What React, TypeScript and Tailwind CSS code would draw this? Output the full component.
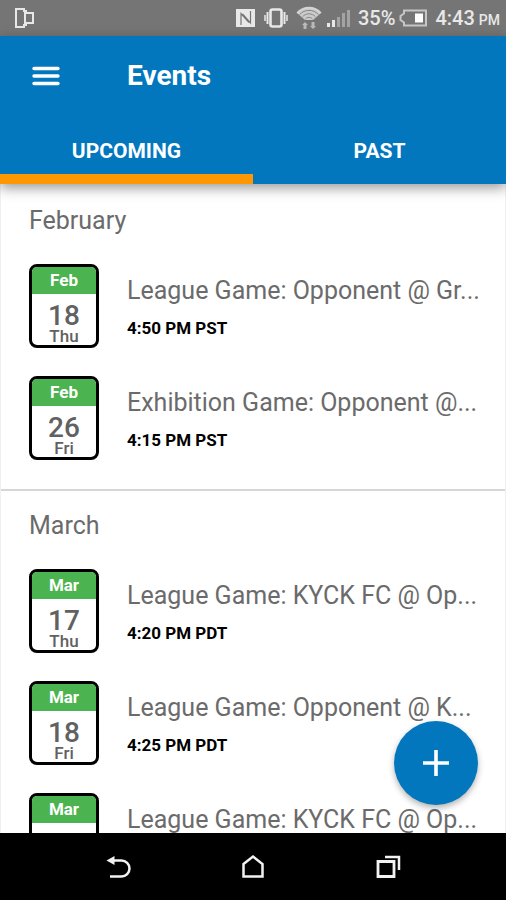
import { useState } from "react";

type eventType = {
  month: string;
  day: number;
  weekday: string;
  title: string;
  time: string;
};

type sectionType = {
  name: string;
  events: eventType[];
};

const sections: sectionType[] = [
  {
    name: "February",
    events: [
      { month: "Feb", day: 18, weekday: "Thu", title: "League Game: Opponent @ Gr...", time: "4:50 PM PST" },
      { month: "Feb", day: 26, weekday: "Fri", title: "Exhibition Game: Opponent @...", time: "4:15 PM PST" },
    ],
  },
  {
    name: "March",
    events: [
      { month: "Mar", day: 17, weekday: "Thu", title: "League Game: KYCK FC @ Op...", time: "4:20 PM PDT" },
      { month: "Mar", day: 18, weekday: "Fri", title: "League Game: Opponent @ K...", time: "4:25 PM PDT" },
      { month: "Mar", day: 24, weekday: "Thu", title: "League Game: KYCK FC @ Op...", time: "4:30 PM PDT" },
    ],
  },
];

function StatusBar() {
  return (
    <div className="flex h-9 shrink-0 items-center justify-between bg-[#757575] pr-1.5 pl-3.5 text-[#e8e8e8]">
      <svg viewBox="0 0 21 22" className="h-[22px] w-[21px]" fill="none" stroke="currentColor" strokeWidth="2">
        <path d="M12 6V4h-2V2H2v18h8v-2h2v-2" />
        <rect x="11" y="6" width="8" height="10" />
      </svg>

      <div className="flex items-center">
        {/* nfc */}
        <svg viewBox="0 0 20 20" className="h-5 w-5">
          <path fill="currentColor" d="M0 1h19v18H0z" />
          <path fill="none" stroke="#757575" strokeWidth="1.200" d="M5 17V5.500l8 9M14.500 3v12L6.500 6" />
        </svg>

        {/* vibrate */}
        <svg viewBox="0 0 24 20" className="ml-2 h-5 w-6" fill="none" stroke="currentColor">
          <rect x="6.500" y="1.500" width="11" height="17" rx="2" strokeWidth="2.600" />
          <path strokeWidth="2" d="M3.500 4v12M20.500 4v12" />
          <path strokeWidth="1.500" d="M1 7v6M23 7v6" />
        </svg>

        {/* wifi */}
        <svg viewBox="0 0 26 24" className="ml-2 h-6 w-[26px]" fill="none" stroke="currentColor">
          <path fill="currentColor" stroke="none" opacity="0.75" d="M1 7C7-.5 19-.5 25 7L17 14H9z" />
          <path stroke="#757575" strokeWidth="0.800" d="M3.500 8.500c5-5.500 14-5.500 19 0M6.500 10.800c3.500-4 9.500-4 13 0M9.500 13c2-2.200 5-2.200 7 0" />
          <path strokeWidth="1.500" opacity="0.75" d="M1 7C7-.5 19-.5 25 7" />
          <path fill="currentColor" stroke="none" opacity="0.6" d="M6 19l3-3 3 3h-1.500v4h-3v-4zM14 20h1.500v-4h3v4H20l-3 3z" />
        </svg>

        {/* signal */}
        <svg viewBox="0 0 24 18" className="ml-1 h-[18px] w-6" fill="currentColor">
          <path d="M1 14h3v4H1zM6 11h3v7H6z" />
          <path opacity="0.4" d="M11 8h3v10h-3zM16 4h3v14h-3zM21 1h3v17h-3z" />
        </svg>

        <span className="ml-2 text-[20px] leading-6 font-medium">35%</span>

        {/* battery */}
        <svg viewBox="0 0 28 18" className="ml-1 h-[18px] w-7">
          <path fill="none" stroke="currentColor" strokeWidth="2" opacity="0.7" d="M5 1.500h22v15H5v-3L1.500 11V7L5 4.500z" />
          <path fill="#fff" d="M16 4.500h8v9h-8z" />
        </svg>

        <span className="ml-2 text-[20px] leading-6 font-medium">
          4:43<span className="ml-1 text-sm">PM</span>
        </span>
      </div>
    </div>
  );
}

function DateBadge({ event }: { event: eventType }) {
  return (
    <div className="flex h-[84px] w-[70px] shrink-0 flex-col overflow-hidden rounded-lg border-[3px] border-black bg-white text-center text-[#616161]">
      <span className="bg-[#4bb34f] text-[17px] leading-[27px] font-bold text-white">{event.month}</span>
      <span className="pt-2.5 text-[28px] leading-6 font-medium">{event.day}</span>
      <span className="text-[17px] leading-4 font-medium">{event.weekday}</span>
    </div>
  );
}

function EventRow({ event }: { event: eventType }) {
  return (
    <li className="flex h-28 items-start pl-7">
      <DateBadge event={event} />
      <div className="ml-7 min-w-0 pt-2">
        <h3 className="text-[25px] leading-[38px] whitespace-nowrap text-[#6b6b6b]">{event.title}</h3>
        <p className="pt-1.5 text-[17px] leading-6 font-bold text-black">{event.time}</p>
      </div>
    </li>
  );
}

export default function App() {
  const [tab, setTab] = useState<string>("UPCOMING");

  return (
    <div className="flex h-screen flex-col overflow-hidden bg-white font-['Roboto',sans-serif]">
      <StatusBar />

      <header className="z-10 shrink-0 bg-[#0277bd] text-white shadow-[0_4px_12px_rgba(0,0,0,0.4)]">
        <div className="flex h-20 items-center pl-8">
          <button aria-label="Menu">
            <svg viewBox="0 0 28 20" className="h-5 w-7" stroke="currentColor" strokeWidth="3.400" strokeLinecap="round">
              <path d="M2 2.500h24M2 10h24M2 17.500h24" />
            </svg>
          </button>
          <h1 className="ml-[67px] text-[28px] leading-8 font-bold">Events</h1>
        </div>

        <nav className="grid h-[68px] grid-cols-2">
          {["UPCOMING", "PAST"].map((name) => (
            <button
              key={name}
              onClick={() => setTab(name)}
              className={`border-b-[10px] pt-3 text-[21px] leading-7 font-bold ${
                tab == name ? "border-[#ff9800]" : "border-transparent"
              }`}
            >
              {name}
            </button>
          ))}
        </nav>
      </header>

      <main className="relative min-h-0 flex-1 overflow-hidden border-x border-[#f0f0f0] pt-0.5">
        {sections.map((section) => (
          <section key={section.name} className="border-b-2 border-[#d6d6d6] pb-px">
            <h2 className="h-[78px] pt-4 pl-7 text-[25px] leading-[38px] text-[#6b6b6b]">{section.name}</h2>
            <ul>
              {section.events.map((event) => (
                <EventRow key={event.title + event.day} event={event} />
              ))}
            </ul>
          </section>
        ))}

        {/* add event */}
        <button
          aria-label="Add event"
          className="absolute right-[27px] bottom-7 flex size-[84px] items-center justify-center rounded-full bg-[#0277bd] text-white shadow-[0_3px_6px_rgba(0,0,0,0.3)]"
        >
          <svg viewBox="0 0 26 26" className="size-[26px]" stroke="currentColor" strokeWidth="3.600">
            <path d="M13 0v26M0 13h26" />
          </svg>
        </button>
      </main>

      <footer className="flex h-[67px] shrink-0 items-center justify-center gap-[109px] bg-black text-[#f2f2f2]">
        <button aria-label="Back">
          <svg viewBox="0 0 26 26" className="size-[26px]" fill="none" stroke="currentColor" strokeWidth="2.500">
            <path d="M7 6.500h9.500a8 8 0 0 1 0 16H5" />
            <path fill="currentColor" stroke="none" d="M1.500 6.500l8-4.500v9z" />
          </svg>
        </button>
        <button aria-label="Home">
          <svg viewBox="0 0 26 26" className="size-[26px]" fill="none" stroke="currentColor" strokeWidth="2.500">
            <path d="M3.500 10L13 2.500 22.500 10v12.500h-19z" />
          </svg>
        </button>
        <button aria-label="Recent apps">
          <svg viewBox="0 0 26 26" className="size-[26px]" fill="none" stroke="currentColor" strokeWidth="2.800">
            <path d="M3 7.500h16v15H3z" />
            <path strokeWidth="2.500" d="M10 3h14v13" />
          </svg>
        </button>
      </footer>
    </div>
  );
}
